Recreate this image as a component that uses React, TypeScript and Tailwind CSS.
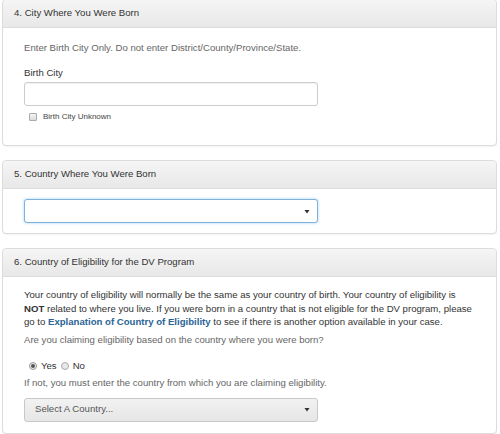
import React from "react";

const Panel: React.FC<{ title: string; className?: string; children: React.ReactNode }> = ({
  title,
  className = "",
  children,
}) => (
  <div className={`rounded-[4px] border border-[#dcdcdc] bg-white shadow-[0_1px_1px_rgba(0,0,0,0.05)] ${className}`}>
    <div className="flex h-[28px] items-center rounded-t-[4px] border-b border-[#dcdcdc] bg-gradient-to-b from-[#f5f5f5] to-[#e8e8e8] px-[11px] text-[9.6px] text-[#333]">
      {title}
    </div>
    {children}
  </div>
);

const Caret = () => (
  <svg width="6" height="5" viewBox="0 0 6 5" className="shrink-0">
    <path d="M0.5 1h5L3 4.5z" fill="#333" />
  </svg>
);

export default function App() {
  return (
    <div
      className="min-h-[434px] bg-white pl-[2px] pr-[3px] text-[#333]"
      style={{ fontFamily: '"Liberation Sans", Arial, sans-serif' }}
    >
      <Panel title="4. City Where You Were Born" className="-mt-px">
        <div className="px-[21px] pt-[13px] pb-[22px] text-[9.6px]">
          <p className="leading-[14px] text-[#666]">
            Enter Birth City Only. Do not enter District/County/Province/State.
          </p>
          <p className="mt-[11px] leading-[14px] text-[#333]">Birth City</p>
          <div className="mt-[2px] h-[24px] w-[294px] rounded-[3px] border border-[#ccc] bg-white shadow-[inset_0_1px_1px_rgba(0,0,0,0.06)]" />
          <label className="mt-[5px] flex items-center gap-[6px] pl-[5px] text-[8px] leading-[12px] text-[#444]">
            <span className="h-[8px] w-[8px] rounded-[1px] border border-[#aaa] bg-gradient-to-b from-[#f4f4f4] to-[#dcdcdc]" />
            Birth City Unknown
          </label>
        </div>
      </Panel>

      <Panel title="5. Country Where You Were Born" className="mt-[14px]">
        <div className="px-[21px] py-[10px]">
          <div className="flex h-[24px] w-[294px] items-center justify-end rounded-[3px] border border-[#7fb2db] bg-white pr-[7px] shadow-[0_0_3px_rgba(102,175,233,0.6)]">
            <Caret />
          </div>
        </div>
      </Panel>

      <Panel title="6. Country of Eligibility for the DV Program" className="mt-[14px]">
        <div className="px-[21px] pt-[11px] pb-[11px] text-[9.6px]">
          <p className="leading-[13.5px] text-[#333]">
            Your country of eligibility will normally be the same as your country of birth. Your country of eligibility is{" "}
            <b>NOT</b> related to where you live. If you were born in a country that is not eligible for the DV program, please
            go to <b className="text-[#2a6496]">Explanation of Country of Eligibility</b> to see if there is another option
            available in your case.
          </p>
          <p className="mt-[4px] leading-[14px] text-[#666]">
            Are you claiming eligibility based on the country where you were born?
          </p>
          <div className="mt-[12px] flex items-center pl-[5px] leading-[14px] text-[#333]">
            <span className="flex h-[8px] w-[8px] items-center justify-center rounded-full border border-[#999] bg-[#eee]">
              <span className="h-[4px] w-[4px] rounded-full bg-[#555]" />
            </span>
            <span className="ml-[4px]">Yes</span>
            <span className="ml-[4px] h-[8px] w-[8px] rounded-full border border-[#aaa] bg-[#e8e8e8]" />
            <span className="ml-[4px]">No</span>
          </div>
          <p className="mt-[3px] leading-[14px] text-[#666]">
            If not, you must enter the country from which you are claiming eligibility.
          </p>
          <div className="mt-[8px] flex h-[24px] w-[294px] items-center justify-between rounded-[3px] border border-[#c8c8c8] bg-gradient-to-b from-[#f2f2f2] to-[#e6e6e6] pl-[10px] pr-[7px] text-[#555]">
            <span>Select A Country...</span>
            <Caret />
          </div>
        </div>
      </Panel>
    </div>
  );
}
